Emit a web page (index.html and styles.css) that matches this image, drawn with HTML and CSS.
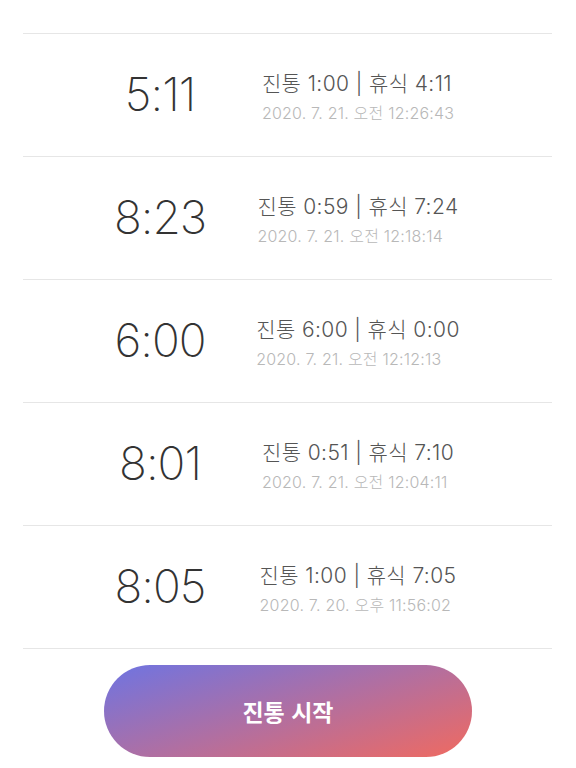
FILE: index.html
```html
<!DOCTYPE html>
<html lang="ko">
<head>
  <meta charset="UTF-8">
  <meta name="viewport" content="width=device-width, initial-scale=1.0">
  <title>진통 기록</title>
  <link rel="stylesheet" href="styles.css">
</head>
<body>
  <div class="screen">
    <!-- 기록 목록 -->
    <ul class="record-list">
      <li class="record-top"></li>
      <li class="record">
        <div class="record-total">5:11</div>
        <div class="record-info">
          <div class="info-box">
            <div class="info-main">진통 1:00 | 휴식 4:11</div>
            <div class="info-date">2020. 7. 21. 오전 12:26:43</div>
          </div>
        </div>
      </li>
      <li class="record">
        <div class="record-total">8:23</div>
        <div class="record-info">
          <div class="info-box">
            <div class="info-main">진통 0:59 | 휴식 7:24</div>
            <div class="info-date">2020. 7. 21. 오전 12:18:14</div>
          </div>
        </div>
      </li>
      <li class="record">
        <div class="record-total">6:00</div>
        <div class="record-info">
          <div class="info-box">
            <div class="info-main">진통 6:00 | 휴식 0:00</div>
            <div class="info-date">2020. 7. 21. 오전 12:12:13</div>
          </div>
        </div>
      </li>
      <li class="record">
        <div class="record-total">8:01</div>
        <div class="record-info">
          <div class="info-box">
            <div class="info-main">진통 0:51 | 휴식 7:10</div>
            <div class="info-date">2020. 7. 21. 오전 12:04:11</div>
          </div>
        </div>
      </li>
      <li class="record">
        <div class="record-total">8:05</div>
        <div class="record-info">
          <div class="info-box">
            <div class="info-main">진통 1:00 | 휴식 7:05</div>
            <div class="info-date">2020. 7. 20. 오후 11:56:02</div>
          </div>
        </div>
      </li>
    </ul>

    <!-- 시작 버튼 -->
    <div class="start-wrap">
      <button class="start-button">진통 시작</button>
    </div>
  </div>
</body>
</html>
```

FILE: styles.css
```css
/* 전체 */
html, body {
  margin: 0;
  padding: 0;
  background: #ffffff;
  font-family: 'Inter', 'Noto Sans CJK KR', sans-serif;
}

.screen {
  width: 576px;
  height: 768px;
  overflow: hidden;
  display: flex;
  flex-direction: column;
}

/* 목록 */
.record-list {
  list-style: none;
  margin: 0 24px 0 23px;
  padding: 0;
}

.record-list li {
  border-bottom: 1px solid #e6e6e6;
}

.record-top {
  height: 33px;
}

.record {
  height: 122px;
  display: flex;
  align-items: center;
  padding-left: 47px;
}

.record-total {
  width: 180px;
  text-align: center;
  font-size: 46px;
  font-weight: 200;
  color: #333333;
  letter-spacing: -1px;
  margin-bottom: 2px;
}

.record-info {
  width: 216px;
  display: flex;
  justify-content: center;
  margin-top: 4px;
}

.info-main {
  font-size: 21px;
  color: #555555;
  line-height: 28px;
  font-weight: 300;
  letter-spacing: 0.4px;
}

.info-date {
  font-size: 16px;
  color: #b8b8b8;
  line-height: 24px;
  font-weight: 300;
  margin-top: 3px;
  letter-spacing: 0.2px;
}

/* 버튼 */
.start-wrap {
  display: flex;
  justify-content: center;
  padding-top: 16px;
}

.start-button {
  width: 368px;
  height: 92px;
  border: none;
  border-radius: 46px;
  background: linear-gradient(162deg, #6e74e2 0%, #b06fa2 50%, #f06a60 100%);
  color: #ffffff;
  font-family: 'Noto Sans CJK KR', sans-serif;
  font-size: 23px;
  font-weight: 700;
  cursor: pointer;
}
```
